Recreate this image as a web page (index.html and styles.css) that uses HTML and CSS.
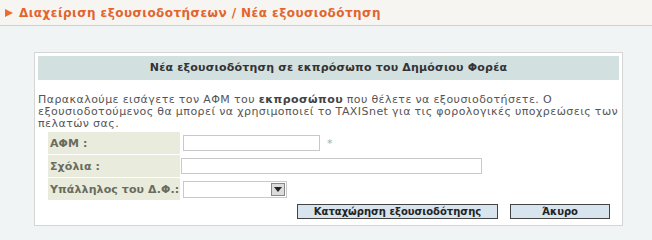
FILE: index.html
```html
<!DOCTYPE html>
<html>
<head>
    <title>Νέα εξουσιοδότηση</title>
    <link rel="stylesheet" href="styles.css">
</head>
<body>
    <div class="page-header">
        <span class="arrow"></span>
        <h1>Διαχείριση εξουσιοδοτήσεων / Νέα εξουσιοδότηση</h1>
    </div>

    <div class="panel">
        <div class="panel-title">Νέα εξουσιοδότηση σε εκπρόσωπο του Δημόσιου Φορέα</div>
        <p class="intro">
            Παρακαλούμε εισάγετε τον ΑΦΜ του <b>εκπροσώπου</b> που θέλετε να εξουσιοδοτήσετε. Ο
            εξουσιοδοτούμενος θα μπορεί να χρησιμοποιεί το TAXISnet για τις φορολογικές υποχρεώσεις των
            πελατών σας.
        </p>

        <div class="form-grid">
            <label class="form-label" for="afm">ΑΦΜ :</label>
            <div class="form-field">
                <input type="text" id="afm" class="input-afm">
                <span class="required">*</span>
            </div>

            <label class="form-label" for="comments">Σχόλια :</label>
            <div class="form-field">
                <input type="text" id="comments" class="input-comments">
            </div>

            <label class="form-label">Υπάλληλος του Δ.Φ.:</label>
            <div class="form-field">
                <div class="fake-select">
                    <span class="select-value"></span>
                    <span class="select-button">
                        <svg width="8" height="5" viewBox="0 0 8 5"><path d="M0 0h8L4 5z" fill="#222"/></svg>
                    </span>
                </div>
            </div>
        </div>

        <div class="form-actions">
            <button class="btn btn-submit">Καταχώρηση εξουσιοδότησης</button>
            <button class="btn btn-cancel">Άκυρο</button>
        </div>
    </div>
</body>
</html>
```

FILE: styles.css
```css
body {
    margin: 0;
    background-color: #f1f4f5;
    font-family: Verdana, "DejaVu Sans", sans-serif;
    font-size: 11px;
    letter-spacing: 0.45px;
    word-spacing: -0.3px;
    color: #555;
    height: 240px;
    overflow: hidden;
}
.page-header {
    height: 25px;
    display: flex;
    align-items: center;
    padding-left: 5px;
    background-color: #f6f5f2;
    border-bottom: 1px solid #dccdbd;
}
.arrow {
    width: 0;
    height: 0;
    border-top: 4px solid transparent;
    border-bottom: 4px solid transparent;
    border-left: 8px solid #ec6a2a;
    margin-right: 6px;
}
.page-header h1 {
    margin: 0;
    font-size: 12px;
    font-weight: bold;
    letter-spacing: 0.45px;
    word-spacing: 0;
    color: #e3642c;
}
.panel {
    margin: 26px 0 0 34px;
    width: 581px;
    padding: 3px 3px 6px;
    background-color: #fff;
    border: 1px solid #d4d6d6;
}
.panel-title {
    height: 24px;
    line-height: 24px;
    text-align: center;
    background-color: #d2e0e0;
    color: #333;
    font-weight: bold;
    letter-spacing: 0.2px;
    word-spacing: 0;
}
.intro {
    margin: 14px 0 0;
    line-height: 12px;
}
.intro b {
    color: #444;
}
.form-grid {
    display: grid;
    grid-template-columns: 132px 1fr;
    grid-auto-rows: 22px;
    row-gap: 1px;
    margin: 2px 9px 0 10px;
}
.form-label {
    background-color: #e9ecdc;
    font-weight: bold;
    letter-spacing: 0.1px;
    word-spacing: 0;
    white-space: nowrap;
    color: #6b6b5e;
    padding-left: 2px;
    display: flex;
    align-items: center;
}
.form-field {
    display: flex;
    align-items: center;
    padding-left: 3px;
}
input {
    height: 16px;
    box-sizing: border-box;
    border: 1px solid #c9c9c9;
    background: #fff;
    padding: 0 2px;
    font: inherit;
}
.input-afm {
    width: 137px;
}
.required {
    color: #aaa;
    margin-left: 7px;
}
.input-comments {
    width: 301px;
    margin-left: -2px;
}
.fake-select {
    width: 104px;
    height: 17px;
    box-sizing: border-box;
    border: 1px solid #c9c9c9;
    background: #fff;
    display: flex;
    justify-content: flex-end;
    align-items: center;
    padding-right: 1px;
}
.select-button {
    width: 14px;
    height: 13px;
    box-sizing: border-box;
    border: 1px solid #888;
    background: #dcdcdc;
    display: flex;
    align-items: center;
    justify-content: center;
}
.form-actions {
    display: flex;
    justify-content: flex-end;
    gap: 12px;
    margin: 4px 9px 0 0;
}
.btn {
    height: 15px;
    padding: 0;
    border: 1px solid #444;
    background-color: #d9e5ee;
    font-family: inherit;
    font-size: 10px;
    font-weight: bold;
    letter-spacing: 0;
    word-spacing: 0;
    color: #222;
    line-height: 13px;
}
.btn-submit {
    width: 201px;
}
.btn-cancel {
    width: 100px;
}
```
